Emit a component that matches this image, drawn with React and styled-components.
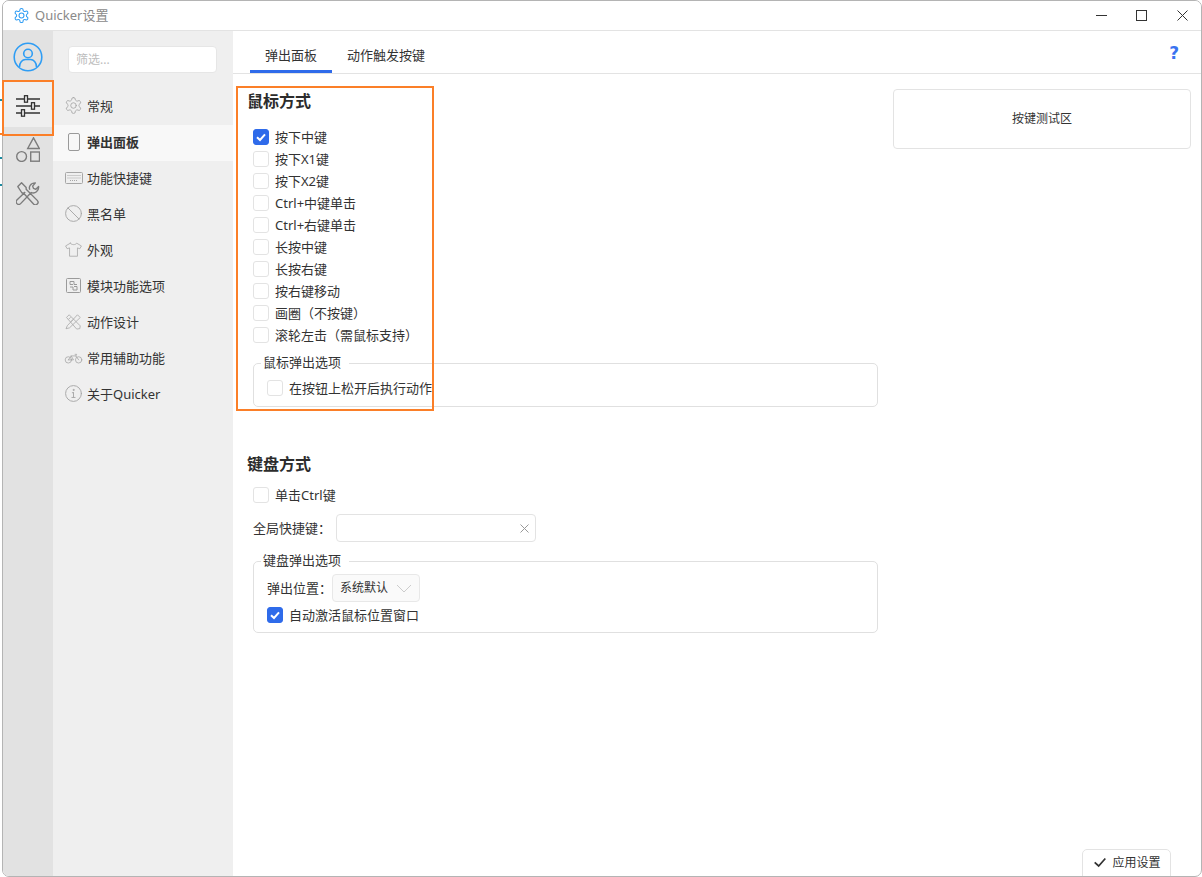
import React from "react";
import styled, { createGlobalStyle } from "styled-components";

const Global = createGlobalStyle`
  html, body { margin: 0; padding: 0; background: #fff; }
  body { font-family: "Noto Sans", "Noto Sans CJK SC", sans-serif; color: #333; overflow: hidden; }
  svg { flex: none; display: block; }
`;
const Stage = styled.div`
  position: relative; width: 1202px; height: 877px; padding-left: 2px; box-sizing: border-box; overflow: hidden;
`;
const Win = styled.div`
  width: 1200px; height: 877px; box-sizing: border-box; border: 1px solid #b4b4b4; border-radius: 7px;
  background: #fff; display: flex; flex-direction: column; overflow: hidden;
`;
const TitleBar = styled.div`
  height: 29px; flex: none; display: flex; align-items: center; padding-left: 10px; border-bottom: 1px solid #e3e3e3; background: #fff;
`;
const Title = styled.span`
  margin-left: 5px; font-size: 13px; color: #8a8a8a; padding-bottom: 2px;
`;
const WinBtns = styled.div`
  margin-left: auto; margin-right: -1px; display: flex;
`;
const WinBtn = styled.div`
  width: 40px; height: 29px; display: flex; align-items: center; justify-content: center; color: #333;
  &:last-child { width: 41px; padding-left: 1px; box-sizing: border-box; }
`;
const Body = styled.div`
  flex: 1; display: flex; min-height: 0;
`;
const Rail = styled.div`
  width: 50px; flex: none; background: #e2e2e2; display: flex; flex-direction: column; align-items: stretch; padding-top: 3px;
`;
const RailItem = styled.div`
  height: ${p => p.$h}px; box-sizing: border-box; padding-top: ${p => p.$pt || 0}px; display: flex; align-items: center; justify-content: center;
  background: ${p => p.$active ? "#efefef" : "transparent"};
`;
const Nav = styled.div`
  width: 180px; flex: none; background: #efefef; padding-top: 15px; box-sizing: border-box;
`;
const Filter = styled.div`
  margin-left: 15px; width: 149px; height: 27px; box-sizing: border-box; background: #fff; border: 1px solid #e6e6e6; border-radius: 4px;
  font-size: 12px; color: #bdbdbd; padding-left: 7px; line-height: 25px;
`;
const NavList = styled.div`
  margin-top: 16px;
`;
const NavItem = styled.div`
  height: 36px; box-sizing: border-box; padding: 0 0 3px 12px; display: flex; align-items: center; font-size: 13px; color: #333; gap: 5px;
  background: ${p => p.$active ? "#f8f8f8" : "transparent"};
  font-weight: ${p => p.$active ? 700 : 400};
`;
const NavIcon = styled.span`
  width: 17px; height: 17px; display: flex; align-items: center; justify-content: center; flex: none;
`;
const Main = styled.div`
  flex: 1; min-width: 0; display: flex; flex-direction: column; position: relative;
`;
const Tabs = styled.div`
  height: 43px; flex: none; box-sizing: border-box; border-bottom: 1px solid #e3e3e3; display: flex; align-items: flex-end; padding-left: 17px;
`;
const Tab = styled.div`
  width: ${p => p.$w}px; height: 29px; box-sizing: border-box; text-align: center; font-size: 13px; line-height: 22px; color: #333;
  border-bottom: 3px solid ${p => p.$active ? "#2f6bea" : "transparent"};
`;
const Help = styled.div`
  margin-left: auto; margin-right: 22px; align-self: flex-start; margin-top: 10px; font-family: "DejaVu Sans", sans-serif; font-size: 17px; line-height: 24px; font-weight: 700; color: #3a73f0;
`;
const Content = styled.div`
  flex: 1; display: flex; min-height: 0;
`;
const Left = styled.div`
  width: 660px; flex: none; box-sizing: border-box; padding: 17px 0 0 14px;
`;
const Heading = styled.h2`
  margin: 0; font-size: 16px; line-height: 20px; font-weight: 700; color: #2c2c2c;
`;
const CheckList = styled.div`
  margin: ${p => p.$mt}px 0 0 6px; display: flex; flex-direction: column;
`;
const Row = styled.label`
  height: 22px; display: flex; align-items: center; gap: 6px; font-size: 13px; color: #333;
`;
const RowText = styled.span`
  padding-bottom: 2px;
`;
const Box = styled.span`
  width: 16px; height: 16px; box-sizing: border-box; border-radius: 3px; flex: none; display: flex; align-items: center; justify-content: center;
  border: 1px solid ${p => p.$on ? "#2f6bea" : "#e3e3e3"}; background: ${p => p.$on ? "#2f6bea" : "#fff"};
`;
const Group = styled.fieldset`
  margin: ${p => p.$mt}px 0 0 6px; width: 625px; box-sizing: border-box; border: 1px solid #e0e0e0; border-radius: 5px; padding: ${p => p.$pt}px 13px 0;
  height: ${p => p.$h}px; min-inline-size: 0;
`;
const Legend = styled.legend`
  margin-left: -6px; padding: 0 8px 3px 2px; font-size: 13px; line-height: 16px; color: #333;
`;
const KeyRow = styled.div`
  display: flex; align-items: center; height: 28px; font-size: 13px; color: #333; margin: 8px 0 0 6px;
`;
const HotInput = styled.div`
  margin-left: 5px; width: 200px; height: 28px; box-sizing: border-box; border: 1px solid #e3e3e3; border-radius: 4px; display: flex; align-items: center; justify-content: flex-end; padding-right: 6px;
`;
const SelectRow = styled.div`
  display: flex; align-items: center; height: 28px; margin-bottom: 2px; font-size: 13px; color: #333;
`;
const Sel = styled.div`
  width: 88px; height: 28px; box-sizing: border-box; border: 1px solid #e8e8e8; border-radius: 4px; background: #fafafa;
  display: flex; align-items: center; justify-content: space-between; padding: 0 7px 0; font-size: 12px;
`;
const SelText = styled.span`
  padding-bottom: 2px;
`;
const Spacer = styled.div`
  height: ${p => p.$h}px;
`;
const Right = styled.div`
  flex: none; padding: 15px 0 0 0;
`;
const TestArea = styled.div`
  width: 298px; height: 60px; box-sizing: border-box; border: 1px solid #e3e3e3; border-radius: 4px; padding-bottom: 3px; display: flex; align-items: center; justify-content: center; font-size: 12px; color: #333;
`;
const Apply = styled.div`
  position: absolute; left: 849px; bottom: -1px; width: 89px; height: 28px; box-sizing: border-box; border: 1px solid #e3e3e3; border-radius: 5px 5px 0 0; padding-bottom: 3px;
  display: flex; align-items: center; justify-content: center; gap: 4px; font-size: 12px; color: #333; background: #fff;
`;
const Mark = styled.div`
  position: absolute; box-sizing: border-box; border: 2px solid #fb7f28; left: ${p => p.$x}px; top: ${p => p.$y}px; width: ${p => p.$w}px; height: ${p => p.$h}px; pointer-events: none;
`;
const Stub = styled.div`
  position: absolute; left: 0; top: 133px; width: 3px; height: 2px; background: #fb7f28;
`;
const Tick = styled.div`
  position: absolute; left: 0; width: 2px; height: 2px; background: #1a8aa0; top: ${p => p.$y}px;
`;

const Ic = ({ s = 19, c = "#a6a6a6", w = 1, children, vb = "0 0 24 24" }) => (
  <svg width={s} height={s} viewBox={vb} fill="none" stroke={c} strokeWidth={w} strokeLinecap="round" strokeLinejoin="round">{children}</svg>
);
const gearPath = "M12.22 2h-.44a2 2 0 0 0-2 2v.18a2 2 0 0 1-1 1.73l-.43.25a2 2 0 0 1-2 0l-.15-.08a2 2 0 0 0-2.73.73l-.22.38a2 2 0 0 0 .73 2.73l.15.1a2 2 0 0 1 1 1.72v.51a2 2 0 0 1-1 1.74l-.15.09a2 2 0 0 0-.73 2.73l.22.38a2 2 0 0 0 2.73.73l.15-.08a2 2 0 0 1 2 0l.43.25a2 2 0 0 1 1 1.73V20a2 2 0 0 0 2 2h.44a2 2 0 0 0 2-2v-.18a2 2 0 0 1 1-1.73l.43-.25a2 2 0 0 1 2 0l.15.08a2 2 0 0 0 2.73-.73l.22-.39a2 2 0 0 0-.73-2.73l-.15-.08a2 2 0 0 1-1-1.74v-.5a2 2 0 0 1 1-1.74l.15-.09a2 2 0 0 0 .73-2.73l-.22-.38a2 2 0 0 0-2.73-.73l-.15.08a2 2 0 0 1-2 0l-.43-.25a2 2 0 0 1-1-1.73V4a2 2 0 0 0-2-2z";
const Gear = ({ c, s, w }) => <Ic c={c} s={s} w={w}><path d={gearPath} /><circle cx="12" cy="12" r="3.500" /></Ic>;
const Check = ({ c = "#fff", s = 12, w = 2 }) => (
  <svg width={s} height={s} viewBox="0 0 12 12" fill="none" stroke={c} strokeWidth={w}><path d="M2 6.200 5 9l5-5.600" /></svg>
);
const Chk = ({ on, children }) => <Row><Box $on={on}>{on && <Check />}</Box><RowText>{children}</RowText></Row>;

const navIcons = {
  gear: <Gear w={1.1} />,
  page: <svg width="12" height="18" viewBox="0 0 12 18" fill="none" stroke="#9a9a9a"><rect x=".5" y=".5" width="11" height="17" rx="1.500" /></svg>,
  kbd: <svg width="18" height="12" viewBox="0 0 18 12" fill="none" stroke="#a6a6a6"><rect x=".5" y=".5" width="17" height="11" rx="1" /><path d="M2.500 3.500h13M2.500 6h13M5 8.500h8" strokeDasharray="1 1" /></svg>,
  ban: <Ic w={1.2}><circle cx="12" cy="12" r="10" /><path d="M5 5l14 14" /></Ic>,
  shirt: <Ic><path d="M8 4 2 7.500l2 3.500 3-1v10.500h10V10l3 1 2-3.500L16 4c-1 2.500-7 2.500-8 0z" /></Ic>,
  mod: <svg width="15" height="15" viewBox="0 0 15 15" fill="none" stroke="#9a9a9a"><rect x=".5" y=".5" width="14" height="14" rx="1" /><path d="M4 3.500h4v3h3M4 3.500v3h3M4 9h3v3h4V8.500H8" /></svg>,
  design: <Ic><path d="M4.500 17 17 3.500l3.500 3.500L7 20l-4 1zM3.500 6.500l3-3 14 14-.5 3.500-3.500.5zM6 9l2-2M9 12l2-2" /></Ic>,
  bike: <Ic><circle cx="5.500" cy="15" r="4" /><circle cx="18.500" cy="15" r="4" /><path d="M5.500 15 9 10h6l3.500 5M9 10l3 5H5.500M14 8h2l-1 2" /></Ic>,
  info: <Ic w={1.2}><circle cx="12" cy="12" r="10" /><path d="M12 11v6M10 17h4M10.500 11H12" /><circle cx="12" cy="7.500" r=".7" /></Ic>,
};
const navs = [
  ["gear", "常规"], ["page", "弹出面板", true], ["kbd", "功能快捷键"], ["ban", "黑名单"], ["shirt", "外观"],
  ["mod", "模块功能选项"], ["design", "动作设计"], ["bike", "常用辅助功能"], ["info", "关于Quicker"],
];
const mouse = ["按下X1键", "按下X2键", "Ctrl+中键单击", "Ctrl+右键单击", "长按中键", "长按右键", "按右键移动", "画圈（不按键）", "滚轮左击（需鼠标支持）"];

export default function App() {
  return (
    <Stage>
      <Global />
      <Tick $y={99} /><Tick $y={157} /><Tick $y={184} />
      <Win>
        <TitleBar>
          <Gear c="#2f9df4" s={17} w={1.5} />
          <Title>Quicker设置</Title>
          <WinBtns>
            <WinBtn><svg width="11" height="11" viewBox="0 0 11 11"><path d="M0 5.500h11" stroke="#333" /></svg></WinBtn>
            <WinBtn><svg width="11" height="11" viewBox="0 0 11 11"><rect x=".5" y=".5" width="10" height="10" fill="none" stroke="#333" /></svg></WinBtn>
            <WinBtn><svg width="11" height="11" viewBox="0 0 11 11"><path d="M.5.500l10 10M10.500.500l-10 10" stroke="#333" /></svg></WinBtn>
          </WinBtns>
        </TitleBar>
        <Body>
          <Rail>
            <RailItem $h={46}>
              <svg width="30" height="30" viewBox="0 0 30 30" fill="none" stroke="#2f9df4" strokeWidth="1.600"><circle cx="15" cy="15" r="13.800" /><circle cx="15" cy="11.500" r="4.300" /><path d="M6.500 25c0-4.600 3-7.500 6-7.500h5c3 0 6 2.900 6 7.500" /></svg>
            </RailItem>
            <RailItem $h={47} $pt={4} $active>
              <svg width="24" height="22" viewBox="0 0 24 22" fill="none" stroke="#333" strokeWidth="1.300"><path d="M0 4h24M0 11h24M0 18h24" /><rect x="8.500" y=".7" width="3" height="6.500" fill="#efefef" /><rect x="15.500" y="7.700" width="3" height="6.500" fill="#efefef" /><rect x="5.500" y="14.700" width="3" height="6.500" fill="#efefef" /></svg>
            </RailItem>
            <RailItem $h={44}>
              <svg width="24" height="25" viewBox="0 0 24 25" fill="none" stroke="#7c7c7c" strokeWidth="1.400"><path d="M17.500 .8 23.300 11.500H11.700z" /><circle cx="5.600" cy="19.500" r="4.900" /><rect x="14.700" y="15" width="8.800" height="9.200" /></svg>
            </RailItem>
            <RailItem $h={44}>
              <svg width="24" height="24" viewBox="0 0 26 26" fill="none" stroke="#7c7c7c" strokeWidth="1.500" strokeLinejoin="round"><path d="M2 6 6 2l5 5v2l12 12a2.800 2.800 0 0 1-4 4L8 13H6.500zM15 9.500c-1.500-3 .5-7.500 6-7.500l-3 3.500 1 2.500 2.500 1 3-3c.5 5-4 8-8 6.500L5 24.500a2.800 2.800 0 0 1-4-4L10 12" /></svg>
            </RailItem>
          </Rail>
          <Nav>
            <Filter>筛选...</Filter>
            <NavList>
              {navs.map(([k, t, a]) => (
                <NavItem key={t} $active={a}><NavIcon>{navIcons[k]}</NavIcon>{t}</NavItem>
              ))}
            </NavList>
          </Nav>
          <Main>
            <Tabs>
              <Tab $w={82} $active>弹出面板</Tab>
              <Tab $w={108}>动作触发按键</Tab>
              <Help>?</Help>
            </Tabs>
            <Content>
              <Left>
                <Heading>鼠标方式</Heading>
                <CheckList $mt={15}>
                  <Chk on>按下中键</Chk>
                  {mouse.map(m => <Chk key={m}>{m}</Chk>)}
                </CheckList>
                <Group $h={53} $mt={8} $pt={4}>
                  <Legend>鼠标弹出选项</Legend>
                  <Chk>在按钮上松开后执行动作</Chk>
                </Group>
                <Spacer $h={47} />
                <Heading>键盘方式</Heading>
                <CheckList $mt={10}>
                  <Chk>单击Ctrl键</Chk>
                </CheckList>
                <KeyRow><RowText>全局快捷键：</RowText>
                  <HotInput><svg width="9" height="9" viewBox="0 0 9 9"><path d="M.5.500l8 8M8.500.500l-8 8" stroke="#999" /></svg></HotInput>
                </KeyRow>
                <Group $h={81} $mt={10} $pt={3}>
                  <Legend>键盘弹出选项</Legend>
                  <SelectRow><RowText>弹出位置：</RowText>
                    <Sel><SelText>系统默认</SelText><svg width="16" height="9" viewBox="0 0 16 9" fill="none" stroke="#ccc"><path d="M1 1l7 7 7-7" /></svg></Sel>
                  </SelectRow>
                  <Chk on>自动激活鼠标位置窗口</Chk>
                </Group>
              </Left>
              <Right><TestArea>按键测试区</TestArea></Right>
            </Content>
            <Apply><Check c="#333" s={16} w={1.300} />应用设置</Apply>
          </Main>
        </Body>
      </Win>
      <Stub />
      <Mark $x={2} $y={80} $w={52} $h={56} />
      <Mark $x={236} $y={86} $w={198} $h={325} />
    </Stage>
  );
}
